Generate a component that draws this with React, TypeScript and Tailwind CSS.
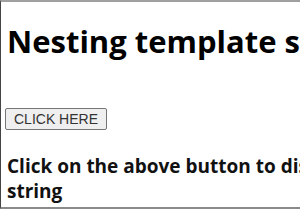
import React, { useState } from "react";

export default function App() {
  const [result, setResult] = useState("");

  return (
    <div className="w-[300px] h-[210px] overflow-hidden bg-white">
      <div
        className="w-[600px] h-[209px] border-t-2 border-l border-b-2 border-t-[#a0a0a0] border-l-[#444] border-b-[#8a8a8a] pl-[6px] pt-[19px]"
        style={{ fontFamily: '"Open Sans", "Noto Sans", sans-serif' }}
      >
        <h1 className="text-[31px] font-bold leading-[40px] text-black whitespace-nowrap">
          Nesting template strings
        </h1>
        <div className="mt-[45px]">
          <button
            type="button"
            onClick={() => setResult("Nested template string")}
            className="h-[22px] w-[102px] -ml-[2px] border border-[#767676] rounded-[2px] bg-[#efefef] text-[14px] text-[#333] leading-none"
            style={{ fontFamily: '"Liberation Sans", Arial, sans-serif' }}
          >
            CLICK HERE
          </button>
        </div>
        <p className="mt-[24px] w-[560px] text-[19px] font-bold leading-[25px] text-[#111]">
          Click on the above button to display the nested template string
        </p>
        {result && <p className="text-[18px]">{result}</p>}
      </div>
    </div>
  );
}
